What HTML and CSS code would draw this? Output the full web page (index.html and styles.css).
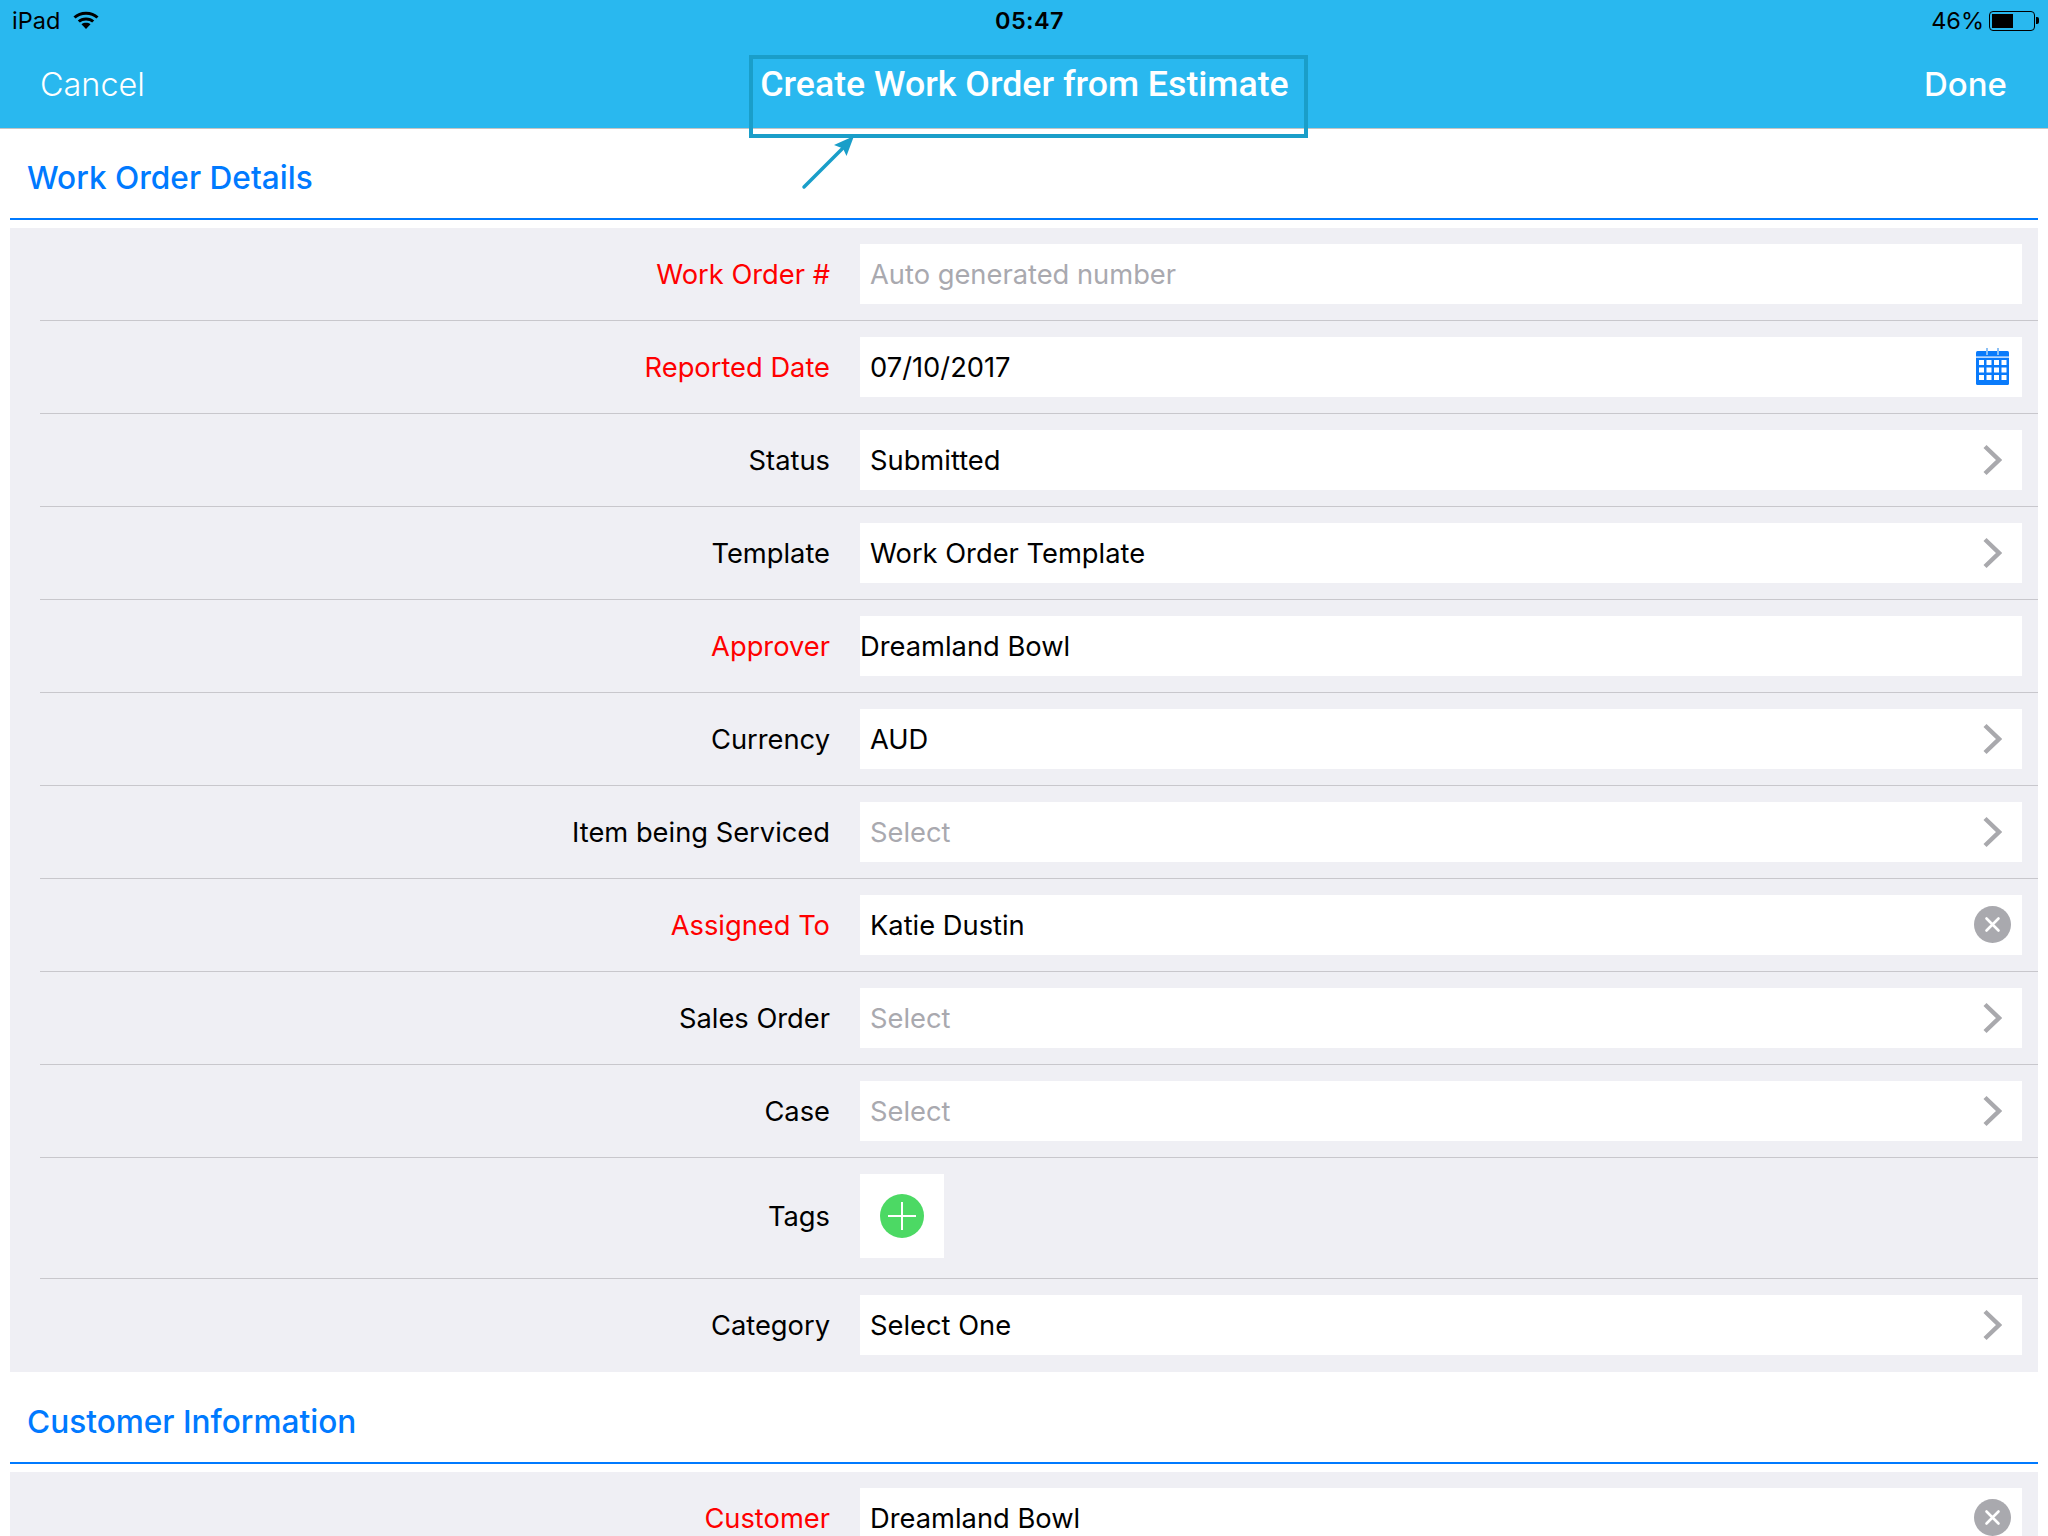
FILE: index.html
```html
<!DOCTYPE html>
<html lang="en">
<head>
<meta charset="utf-8">
<title>Create Work Order from Estimate</title>
<link rel="stylesheet" href="styles.css">
</head>
<body>
<svg class="defs" width="0" height="0" aria-hidden="true">
  <symbol id="chev" viewBox="0 0 20 32"><path d="M3 2.500 17 16 3 29.500" fill="none" stroke="#a9a9ad" stroke-width="4.4"/></symbol>
  <symbol id="clear" viewBox="0 0 37 37"><circle cx="18.5" cy="18.5" r="18.5" fill="#a9a9ae"/><path d="M12.500 12.500 24.500 24.500M24.500 12.500 12.500 24.500" stroke="#fff" stroke-width="2.6" stroke-linecap="round"/></symbol>
</svg>
<header class="topbar">
  <div class="status">
    <div class="status-left">
      <span>iPad</span>
      <svg class="wifi" width="26" height="20" viewBox="0 0 26 20"><path d="M1.5 7.5C7.5 1.8 18.500 1.800 24.500 7.500" fill="none" stroke="#000" stroke-width="3"/><path d="M5.800 11.500C9.500 8 16.500 8 20.200 11.500" fill="none" stroke="#000" stroke-width="3"/><path d="M8.500 14.200C11 12.300 15 12.300 17.500 14.200L13 19Z" fill="#000"/></svg>
    </div>
    <div class="status-time">05:47</div>
    <div class="status-right">
      <span>46%</span>
      <span class="battery"><span class="battery-fill"></span></span>
      <span class="battery-nub"></span>
    </div>
  </div>
  <nav class="nav">
    <span class="nav-cancel">Cancel</span>
    <span class="nav-title">Create Work Order from Estimate</span>
    <span class="nav-done">Done</span>
  </nav>
</header>
<div class="callout"></div>
<svg class="callout-arrow" width="60" height="60" viewBox="0 0 60 60"><path d="M4 54 46 12" fill="none" stroke="#1a9ec9" stroke-width="3.500" stroke-linecap="round"/><path d="M54 3 46.500 23 43 15.500 34 12Z" fill="#1a9ec9"/></svg>
<main class="content">
  <h2 class="section-title">Work Order Details</h2>
  <section class="panel">
    <div class="row"><label class="label req">Work Order #</label><div class="field placeholder">Auto generated number</div></div>
    <div class="row"><label class="label req">Reported Date</label><div class="field">07/10/2017
      <svg class="icon-cal" width="33" height="37" viewBox="0 0 33 37"><rect x="0" y="3" width="33" height="34" rx="1.500" fill="#0a7bfb"/><rect x="10" y="0" width="2" height="7" fill="#8cc0f5"/><rect x="21" y="0" width="2" height="7" fill="#8cc0f5"/><rect x="0" y="8.500" width="33" height="1.200" fill="#fff"/><g fill="#fff"><rect x="3" y="12" width="5" height="5"/><rect x="10.500" y="12" width="5" height="5"/><rect x="18" y="12" width="5" height="5"/><rect x="25.500" y="12" width="5" height="5"/><rect x="3" y="19.500" width="5" height="5"/><rect x="10.500" y="19.500" width="5" height="5"/><rect x="18" y="19.500" width="5" height="5"/><rect x="25.500" y="19.500" width="5" height="5"/><rect x="3" y="27" width="5" height="5"/><rect x="10.500" y="27" width="5" height="5"/><rect x="18" y="27" width="5" height="5"/><rect x="25.500" y="27" width="5" height="5"/></g></svg>
    </div></div>
    <div class="row"><label class="label">Status</label><div class="field">Submitted<svg class="icon-chev"><use href="#chev"/></svg></div></div>
    <div class="row"><label class="label">Template</label><div class="field">Work Order Template<svg class="icon-chev"><use href="#chev"/></svg></div></div>
    <div class="row"><label class="label req">Approver</label><div class="field field-flush">Dreamland Bowl</div></div>
    <div class="row"><label class="label">Currency</label><div class="field">AUD<svg class="icon-chev"><use href="#chev"/></svg></div></div>
    <div class="row"><label class="label">Item being Serviced</label><div class="field placeholder">Select<svg class="icon-chev"><use href="#chev"/></svg></div></div>
    <div class="row"><label class="label req">Assigned To</label><div class="field">Katie Dustin<svg class="icon-clear"><use href="#clear"/></svg></div></div>
    <div class="row"><label class="label">Sales Order</label><div class="field placeholder">Select<svg class="icon-chev"><use href="#chev"/></svg></div></div>
    <div class="row"><label class="label">Case</label><div class="field placeholder">Select<svg class="icon-chev"><use href="#chev"/></svg></div></div>
    <div class="row row-tags"><label class="label">Tags</label><div class="tag-box"><span class="tag-add"></span></div></div>
    <div class="row row-last"><label class="label">Category</label><div class="field">Select One<svg class="icon-chev"><use href="#chev"/></svg></div></div>
  </section>
  <h2 class="section-title section-title-second">Customer Information</h2>
  <section class="panel">
    <div class="row row-last"><label class="label req">Customer</label><div class="field">Dreamland Bowl<svg class="icon-clear"><use href="#clear"/></svg></div></div>
  </section>
</main>
</body>
</html>
```
FILE: styles.css
```css
* { box-sizing: border-box; }
html, body { margin: 0; height: 1536px; overflow: hidden; background: #fff; }
body { font-family: Inter, "Liberation Sans", sans-serif; color: #000; position: relative; }
.defs { position: absolute; }

.topbar { background: #29b8ef; border-bottom: 1px solid #c4c4c4; height: 129px; }
.status { height: 40px; padding: 1px 9px 0 12px; display: grid; grid-template-columns: 1fr auto 1fr; align-items: center; font-size: 23.5px; }
.status-left { display: flex; align-items: center; gap: 13px; }
.wifi { display: block; margin-top: -1px; }
.status-time { font-weight: 600; letter-spacing: .4px; margin-left: 8px; }
.status-right { display: flex; align-items: center; justify-content: flex-end; }
.battery { width: 46px; height: 20px; border: 1.5px solid #000; border-radius: 4px; padding: 2px; margin-left: 5px; display: block; }
.battery-fill { display: block; width: 21px; height: 100%; background: #000; }
.battery-nub { width: 3px; height: 7px; background: #000; border-radius: 0 2px 2px 0; margin-left: 1px; }

.nav { height: 88px; padding: 0 41px 0 40px; display: grid; grid-template-columns: 1fr auto 1fr; align-items: center; color: #fff; font-size: 32.4px; }
.nav-cancel { font-weight: 300; }
.nav-title { font-family: Roboto, Inter, sans-serif; font-weight: 500; font-size: 35.7px; margin-left: 2px; }
.nav-done { text-align: right; font-weight: 500; font-size: 33px; }

.callout { position: absolute; left: 749px; top: 55px; width: 559px; height: 83px; border: 4px solid #1a9ec9; }
.callout-arrow { position: absolute; left: 800px; top: 133px; }

.content { padding: 0 10px; }
.section-title { margin: 0 0 8px; height: 91px; border-bottom: 2px solid #007aff; padding: 8px 0 0 17px; display: flex; align-items: center; font-size: 31.6px; font-weight: 500; color: #007aff; }
.section-title-second { height: 92px; }

.panel { background: #efeff4; padding-left: 30px; padding-right: 16px; }
.row { display: grid; grid-template-columns: 790px 1fr; column-gap: 30px; align-items: center; margin-right: -16px; padding: 16px 16px 16px 0; border-bottom: 1px solid #c8c7cc; height: 93px; }
.row-tags { height: 121px; padding-bottom: 20px; }
.row-last { border-bottom: 0; height: 93px; padding-bottom: 17px; }
.label { text-align: right; font-size: 27.3px; }
.req { color: #ff0000; }
.field { height: 60px; background: #fff; padding: 0 10px; display: flex; align-items: center; font-size: 27.3px; }
.field-flush { padding-left: 0; }
.placeholder { color: #a9a9af; }

.icon-chev { width: 20px; height: 32px; margin-left: auto; margin-right: 10px; }
.icon-clear { width: 37px; height: 37px; margin-left: auto; margin-right: 1px; margin-top: -1px; }
.icon-cal { margin-left: auto; margin-right: 3px; margin-top: -1px; }

.tag-box { width: 84px; height: 84px; background: #fff; display: flex; align-items: center; justify-content: center; }
.tag-add { width: 44px; height: 44px; border-radius: 50%; background: #4cd964; position: relative; display: block; }
.tag-add::before, .tag-add::after { content: ""; position: absolute; background: #fff; }
.tag-add::before { left: 8px; right: 8px; top: 21px; height: 2px; }
.tag-add::after { top: 8px; bottom: 8px; left: 21px; width: 2px; }
```
